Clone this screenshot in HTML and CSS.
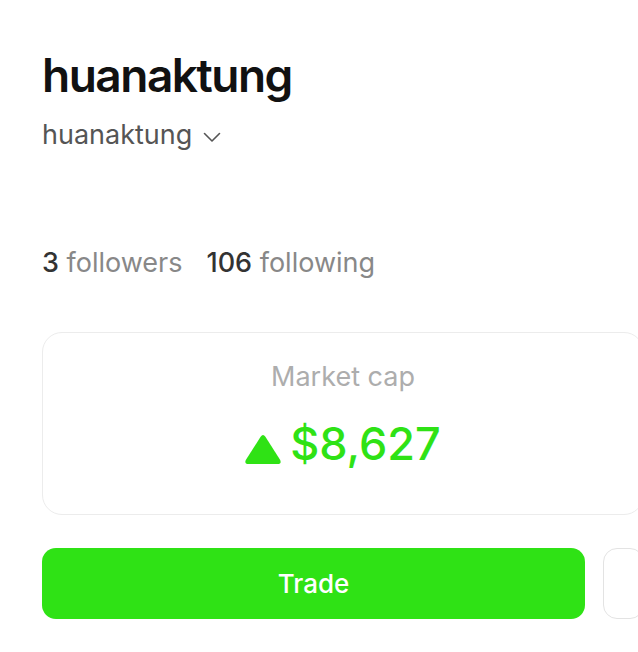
FILE: index.html
```html
<!DOCTYPE html>
<html>
<head>
<meta charset="utf-8">
<link rel="stylesheet" href="styles.css">
</head>
<body>
<main class="profile">
  <h1 class="title">huanaktung</h1>
  <button class="handle">huanaktung
    <svg class="chev" width="18" height="11" viewBox="0 0 18 11"><path d="M1.5 1.5l7.5 7.5 7.5-7.5" fill="none" stroke="#555" stroke-width="1.6" stroke-linecap="round" stroke-linejoin="round"/></svg>
  </button>
  <div class="stats">
    <span class="stat"><b>3</b> followers</span>
    <span class="stat"><b>106</b> following</span>
  </div>
  <section class="card">
    <div class="label">Market cap</div>
    <div class="value">
      <svg class="tri" width="36" height="29" viewBox="0 0 36 29"><path d="M15.6 1.8Q18-1.8 20.4 1.8L35.2 25Q36.8 29 32.6 29H3.4Q-0.8 29 0.8 25Z" fill="#2fe215"/></svg>
      <span>$8,627</span>
    </div>
  </section>
  <div class="actions">
    <button class="trade">Trade</button>
    <button class="secondary"></button>
  </div>
</main>
</body>
</html>
```
FILE: styles.css
```css
html, body {
  margin: 0;
  padding: 0;
  background: #fff;
  overflow: hidden;
}
body {
  font-family: Inter, "Noto Sans", sans-serif;
  color: #111;
}
.profile {
  width: 602px;
  margin-left: 42px;
  padding-top: 47px;
  display: flex;
  flex-direction: column;
}
.title {
  margin: 0;
  font-size: 46px;
  font-weight: 600;
  letter-spacing: -1.5px;
  line-height: 56px;
  color: #111;
}
.handle {
  align-self: flex-start;
  margin-top: 14px;
  padding: 0;
  border: 0;
  background: none;
  font-family: inherit;
  font-size: 27px;
  color: #555;
  line-height: 36px;
  display: flex;
  align-items: center;
  gap: 11px;
}
.chev { margin-top: 5px; }
.stats {
  margin-top: 92px;
  display: flex;
  gap: 24px;
  font-size: 27px;
  line-height: 36px;
  color: #888;
}
.stat b {
  font-weight: 500;
  color: #333;
}
.card {
  margin-top: 51px;
  height: 183px;
  border: 1px solid #ececec;
  border-radius: 20px;
  display: flex;
  flex-direction: column;
  align-items: center;
  box-sizing: border-box;
  padding-top: 27px;
}
.label {
  font-size: 27px;
  color: #adadad;
  line-height: 34px;
}
.value {
  margin-top: 23px;
  display: flex;
  align-items: center;
  gap: 9px;
  font-size: 45px;
  font-weight: 500;
  color: #2fe215;
  line-height: 54px;
}
.tri { margin-top: 10px; }
.actions {
  margin-top: 33px;
  display: flex;
  gap: 18px;
}
.trade {
  flex: 1;
  height: 71px;
  border: 0;
  border-radius: 14px;
  background: #2fe215;
  color: #fff;
  font-family: inherit;
  font-size: 26px;
  font-weight: 500;
}
.secondary {
  flex: 0 0 41px;
  height: 71px;
  border: 1px solid #e3e3e3;
  border-radius: 14px;
  background: #fff;
}
```
